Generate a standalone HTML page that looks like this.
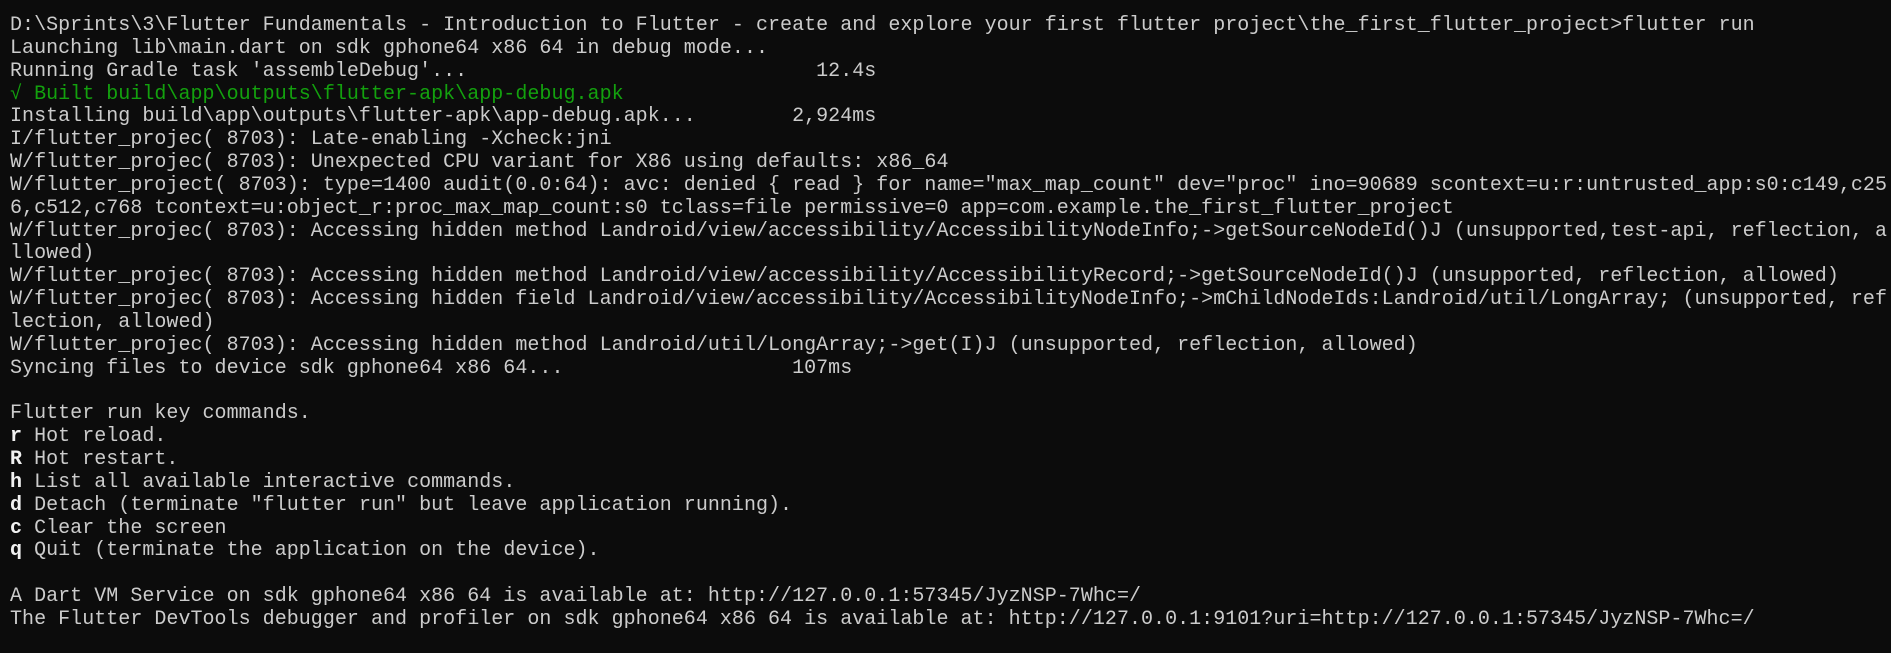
<!DOCTYPE html>
<html><head><meta charset="utf-8"><style>
html,body{margin:0;padding:0;background:#0c0c0c;width:1891px;height:653px;overflow:hidden}
pre{margin:0;position:absolute;left:10px;top:15px;font-family:"Liberation Mono",monospace;font-size:20px;line-height:22.85px;letter-spacing:0.03px;color:#cccccc;white-space:pre}
.g{color:#13a10e}.b{color:#f2f2f2;font-weight:bold}
</style></head><body><pre>D:\Sprints\3\Flutter Fundamentals - Introduction to Flutter - create and explore your first flutter project\the_first_flutter_project&gt;flutter run
Launching lib\main.dart on sdk gphone64 x86 64 in debug mode...
Running Gradle task 'assembleDebug'...                             12.4s
<span class="g">√ Built build\app\outputs\flutter-apk\app-debug.apk</span>
Installing build\app\outputs\flutter-apk\app-debug.apk...        2,924ms
I/flutter_projec( 8703): Late-enabling -Xcheck:jni
W/flutter_projec( 8703): Unexpected CPU variant for X86 using defaults: x86_64
W/flutter_project( 8703): type=1400 audit(0.0:64): avc: denied { read } for name="max_map_count" dev="proc" ino=90689 scontext=u:r:untrusted_app:s0:c149,c25
6,c512,c768 tcontext=u:object_r:proc_max_map_count:s0 tclass=file permissive=0 app=com.example.the_first_flutter_project
W/flutter_projec( 8703): Accessing hidden method Landroid/view/accessibility/AccessibilityNodeInfo;-&gt;getSourceNodeId()J (unsupported,test-api, reflection, a
llowed)
W/flutter_projec( 8703): Accessing hidden method Landroid/view/accessibility/AccessibilityRecord;-&gt;getSourceNodeId()J (unsupported, reflection, allowed)
W/flutter_projec( 8703): Accessing hidden field Landroid/view/accessibility/AccessibilityNodeInfo;-&gt;mChildNodeIds:Landroid/util/LongArray; (unsupported, ref
lection, allowed)
W/flutter_projec( 8703): Accessing hidden method Landroid/util/LongArray;-&gt;get(I)J (unsupported, reflection, allowed)
Syncing files to device sdk gphone64 x86 64...                   107ms

Flutter run key commands.
<span class="b">r</span> Hot reload.
<span class="b">R</span> Hot restart.
<span class="b">h</span> List all available interactive commands.
<span class="b">d</span> Detach (terminate "flutter run" but leave application running).
<span class="b">c</span> Clear the screen
<span class="b">q</span> Quit (terminate the application on the device).

A Dart VM Service on sdk gphone64 x86 64 is available at: http://127.0.0.1:57345/JyzNSP-7Whc=/
The Flutter DevTools debugger and profiler on sdk gphone64 x86 64 is available at: http://127.0.0.1:9101?uri=http://127.0.0.1:57345/JyzNSP-7Whc=/
</pre></body></html>
